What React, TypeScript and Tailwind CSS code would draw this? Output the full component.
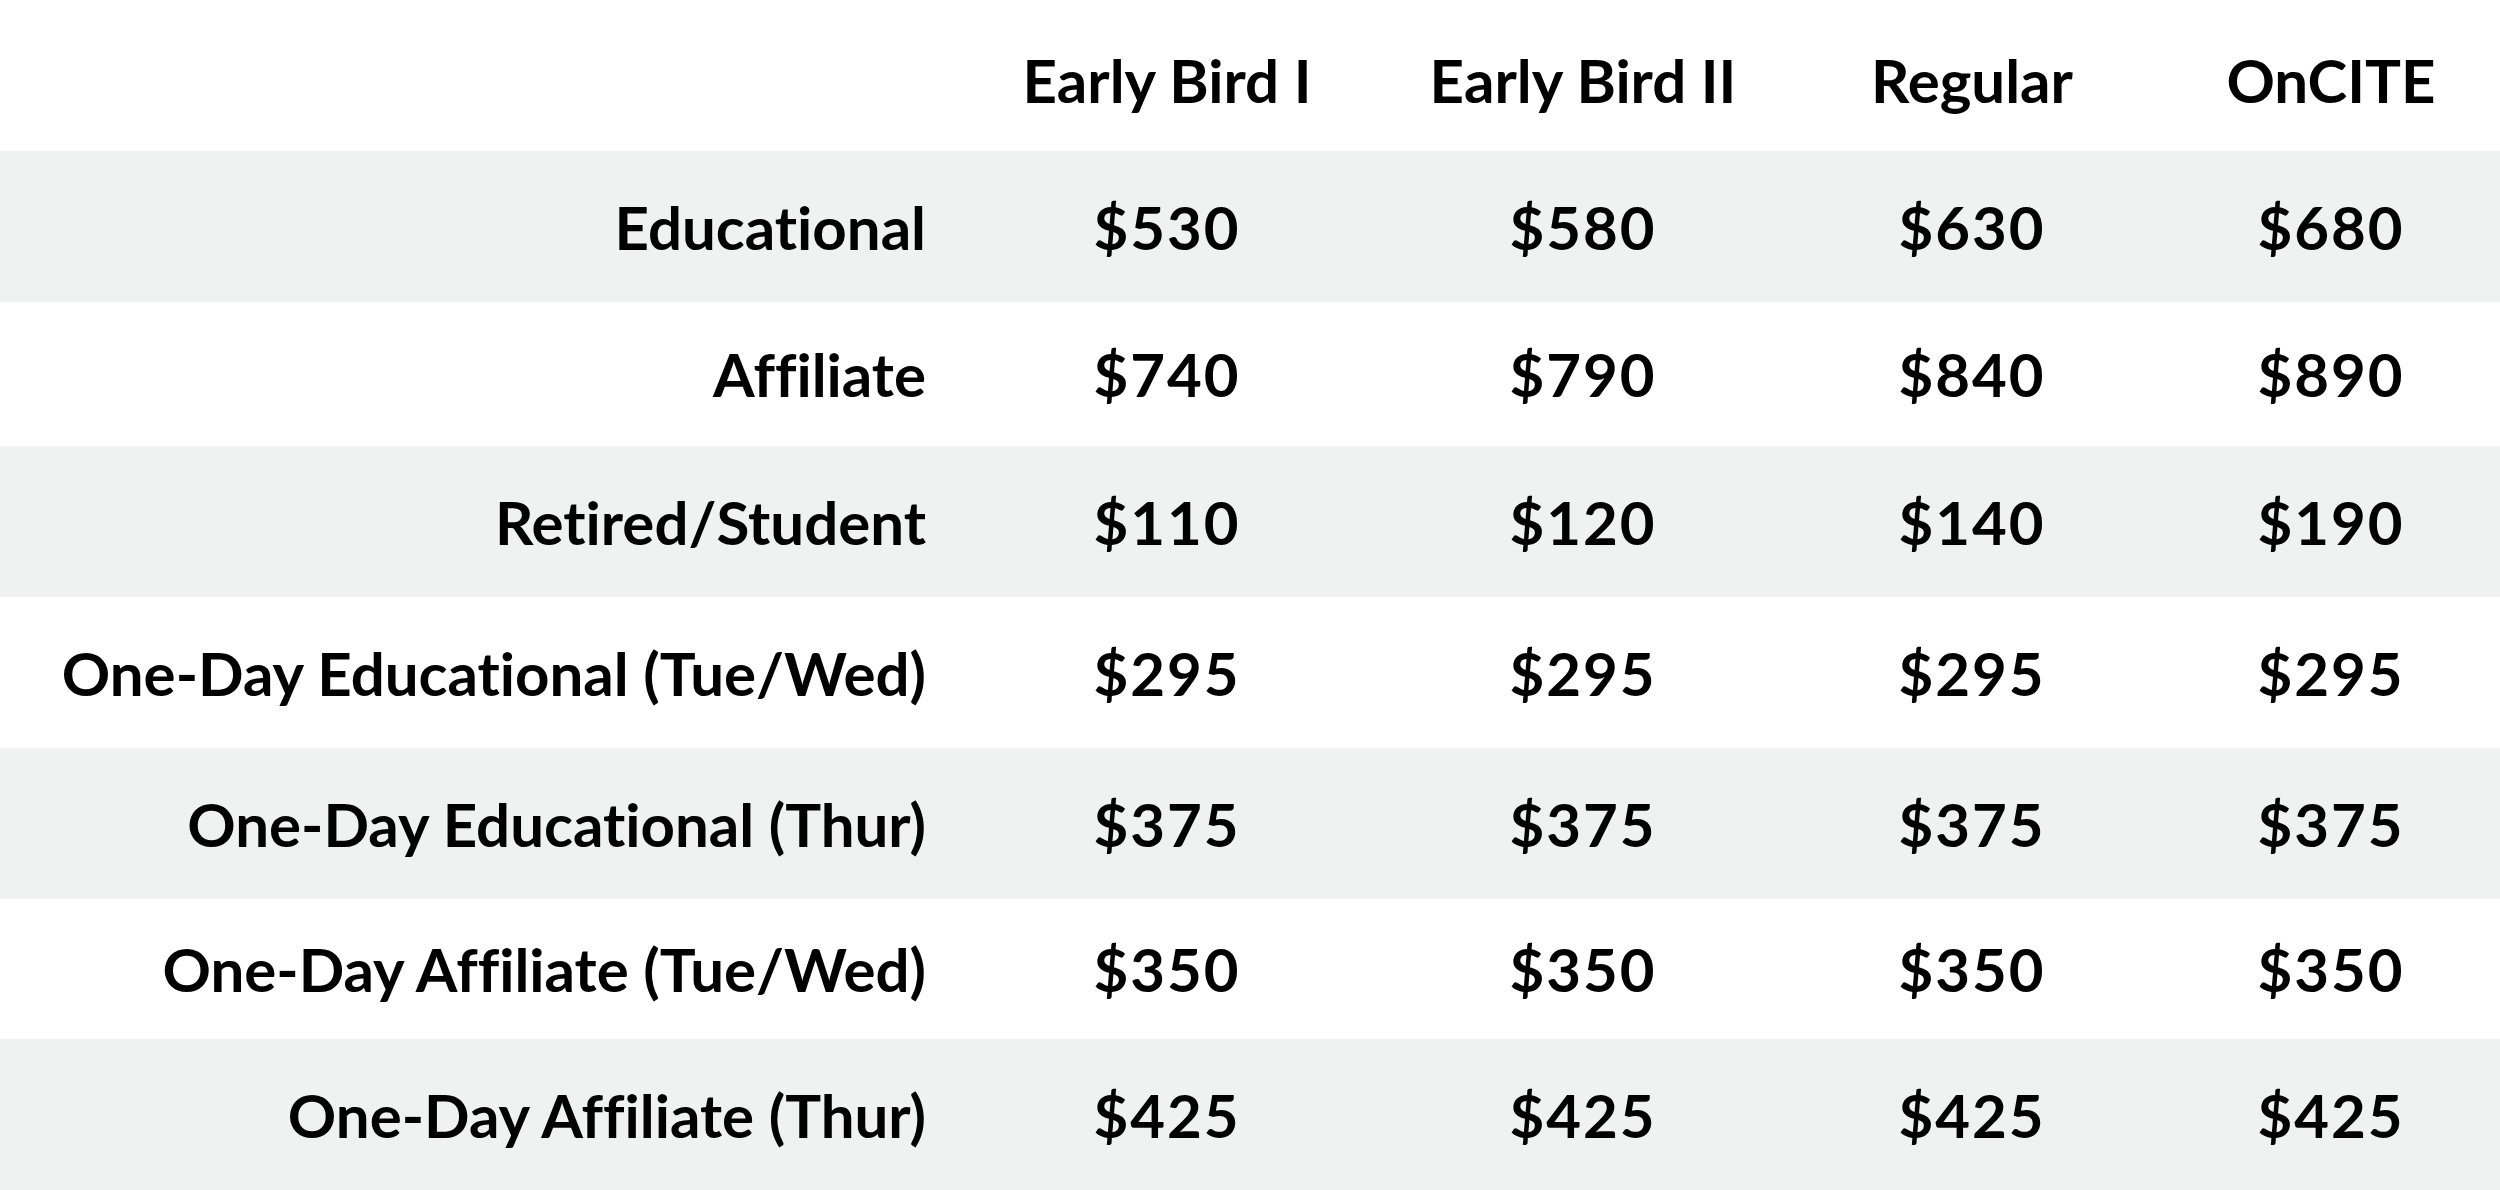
const columns = ["Early Bird I", "Early Bird II", "Regular", "OnCITE"];

type Row = { label: string; prices: string[]; height: string; shaded: boolean };

const rows: Row[] = [
  { label: "Educational", prices: ["$530", "$580", "$630", "$680"], height: "h-[151px]", shaded: true },
  { label: "Affiliate", prices: ["$740", "$790", "$840", "$890"], height: "h-[144px]", shaded: false },
  { label: "Retired/Student", prices: ["$110", "$120", "$140", "$190"], height: "h-[151px]", shaded: true },
  { label: "One-Day Educational (Tue/Wed)", prices: ["$295", "$295", "$295", "$295"], height: "h-[151px]", shaded: false },
  { label: "One-Day Educational (Thur)", prices: ["$375", "$375", "$375", "$375"], height: "h-[151px]", shaded: true },
  { label: "One-Day Affiliate (Tue/Wed)", prices: ["$350", "$350", "$350", "$350"], height: "h-[140px]", shaded: false },
  { label: "One-Day Affiliate (Thur)", prices: ["$425", "$425", "$425", "$425"], height: "h-[151px]", shaded: true },
];

const grid = "grid grid-cols-[950px_434px_398px_380px_338px]";

export default function App() {
  return (
    <div className="w-[2500px] h-[1190px] bg-white text-black font-bold text-[60px] leading-none font-['Lato',sans-serif] [font-variant-ligatures:none]">
      {/* header */}
      <div className={`${grid} h-[151px]`}>
        <div />
        {columns.map((col) => (
          <div key={col} className="flex items-center justify-center pt-[9px]">
            {col}
          </div>
        ))}
      </div>

      {rows.map((row) => (
        <div key={row.label} className={`${grid} ${row.height} ${row.shaded ? "bg-[#f0f2f1]" : "bg-white"}`}>
          <div className="flex items-center justify-end pr-[24px] whitespace-nowrap">{row.label}</div>
          {row.prices.map((price, i) => (
            <div key={i} className="flex items-center justify-center tracking-[2px]">
              {price}
            </div>
          ))}
        </div>
      ))}
    </div>
  );
}
